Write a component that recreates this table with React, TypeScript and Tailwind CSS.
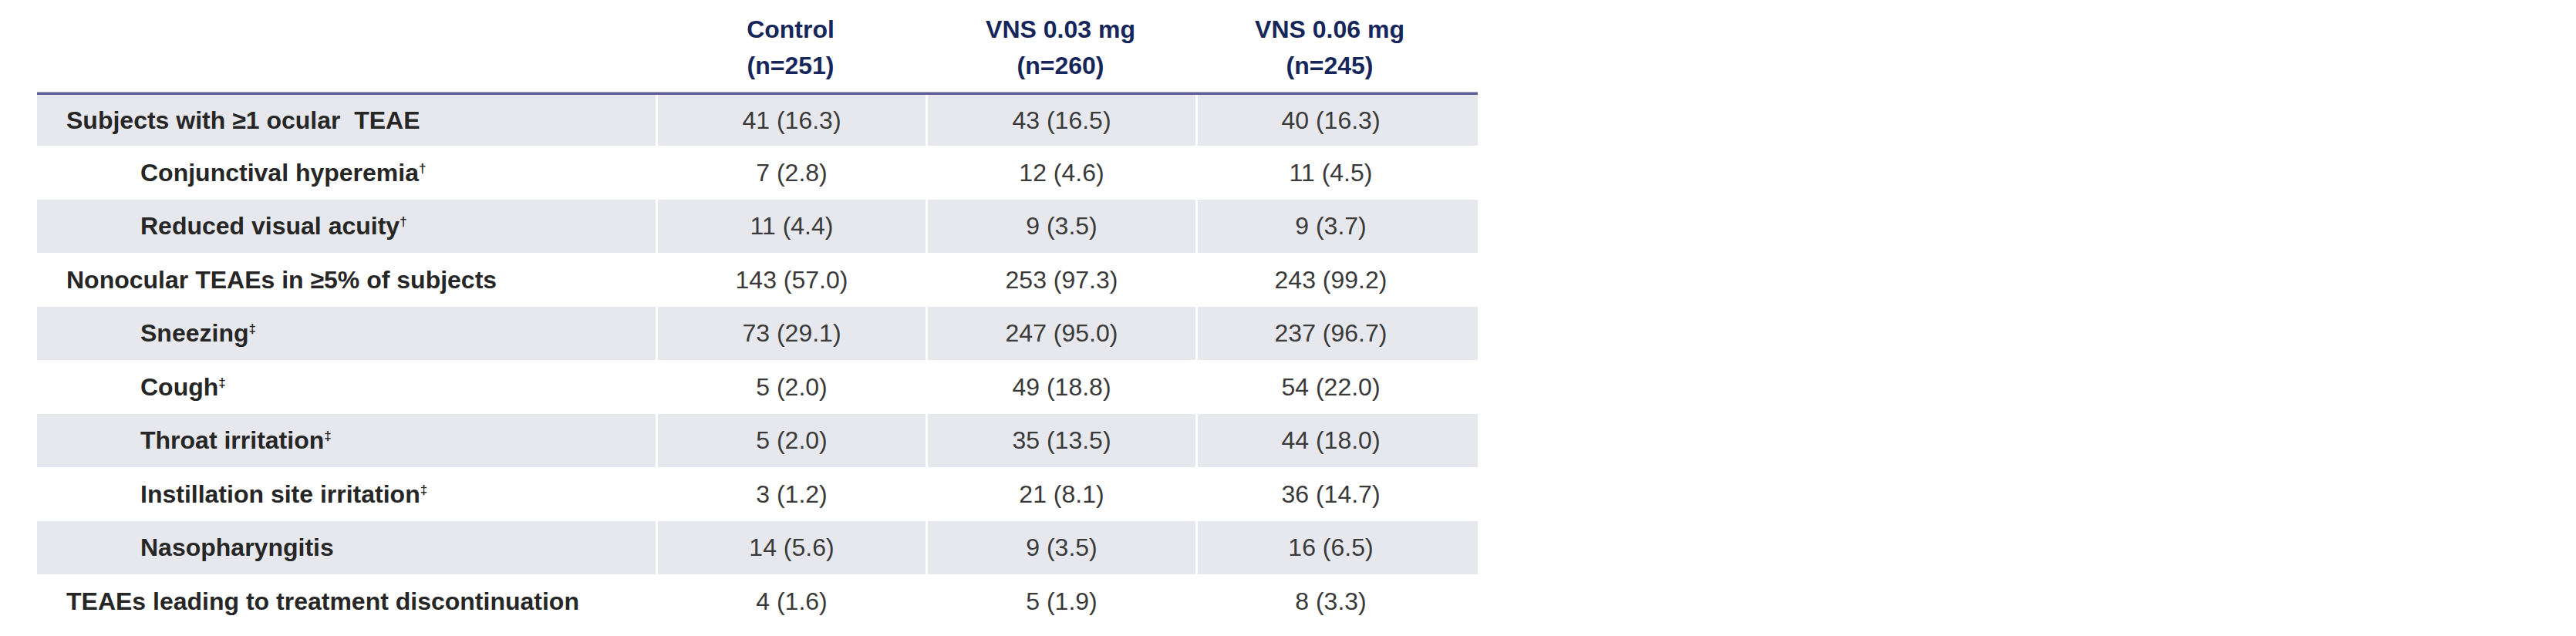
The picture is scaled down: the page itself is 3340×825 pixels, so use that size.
import React from 'react'

type Row = {
    label: string
    mark?: string
    indent?: boolean
    values: [string, string, string]
}

const rows: Row[] = [
    { label: 'Subjects with ≥1 ocular\u00a0 TEAE', values: ['41 (16.3)', '43 (16.5)', '40 (16.3)'] },
    { label: 'Conjunctival hyperemia', mark: '†', indent: true, values: ['7 (2.8)', '12 (4.6)', '11 (4.5)'] },
    { label: 'Reduced visual acuity', mark: '†', indent: true, values: ['11 (4.4)', '9 (3.5)', '9 (3.7)'] },
    { label: 'Nonocular TEAEs in ≥5% of subjects', values: ['143 (57.0)', '253 (97.3)', '243 (99.2)'] },
    { label: 'Sneezing', mark: '‡', indent: true, values: ['73 (29.1)', '247 (95.0)', '237 (96.7)'] },
    { label: 'Cough', mark: '‡', indent: true, values: ['5 (2.0)', '49 (18.8)', '54 (22.0)'] },
    { label: 'Throat irritation', mark: '‡', indent: true, values: ['5 (2.0)', '35 (13.5)', '44 (18.0)'] },
    { label: 'Instillation site irritation', mark: '‡', indent: true, values: ['3 (1.2)', '21 (8.1)', '36 (14.7)'] },
    { label: 'Nasopharyngitis', indent: true, values: ['14 (5.6)', '9 (3.5)', '16 (6.5)'] },
    { label: 'TEAEs leading to treatment discontinuation', values: ['4 (1.6)', '5 (1.9)', '8 (3.3)'] },
]

const headers = [
    { title: 'Control', n: '(n=251)' },
    { title: 'VNS 0.03 mg', n: '(n=260)' },
    { title: 'VNS 0.06 mg', n: '(n=245)' },
]

const colWidths = ['w-[350px]', 'w-[350px]', 'w-[366px] pr-[18px]']

export default function App() {
    return (
        <div className="w-[3340px] h-[825px] bg-white pl-[48px] font-['Liberation_Sans',Arial,sans-serif] overflow-hidden">
            <div className="w-[1868px]">
                {/* Column headers */}
                <div className="flex h-[119px] pt-[15px]">
                    <div className="w-[802px]" />
                    {headers.map((h, i) => (
                        <div key={h.title} className={`${colWidths[i]} flex flex-col items-center text-[32px] leading-[47px] font-bold text-[#16265a]`}>
                            <span>{h.title}</span>
                            <span>{h.n}</span>
                        </div>
                    ))}
                </div>

                <div className="h-[4px] bg-[#5d5d97] border-t border-[#b4b4cf]" />

                {rows.map((row, idx) => {
                    const shaded = idx % 2 === 0
                    return (
                        <div
                            key={row.label}
                            className={`flex ${idx === 0 ? 'h-[66px]' : 'h-[69.5px]'} ${shaded ? 'bg-[#e7e8ed]' : 'bg-white'}`}
                        >
                            <div className={`w-[802px] flex items-center text-[32px] font-bold text-[#262626] whitespace-nowrap ${row.indent ? 'pl-[134px]' : 'pl-[38px]'}`}>
                                <span>
                                    {row.label}
                                    {row.mark && <span className="relative -top-[11px] text-[17px]">{row.mark}</span>}
                                </span>
                            </div>
                            {row.values.map((v, i) => (
                                <div
                                    key={i}
                                    className={`${colWidths[i]} flex items-center justify-center border-l-[3px] border-white text-[32px] text-[#3a3a3a] whitespace-nowrap`}
                                >
                                    {v}
                                </div>
                            ))}
                        </div>
                    )
                })}
            </div>
        </div>
    )
}
